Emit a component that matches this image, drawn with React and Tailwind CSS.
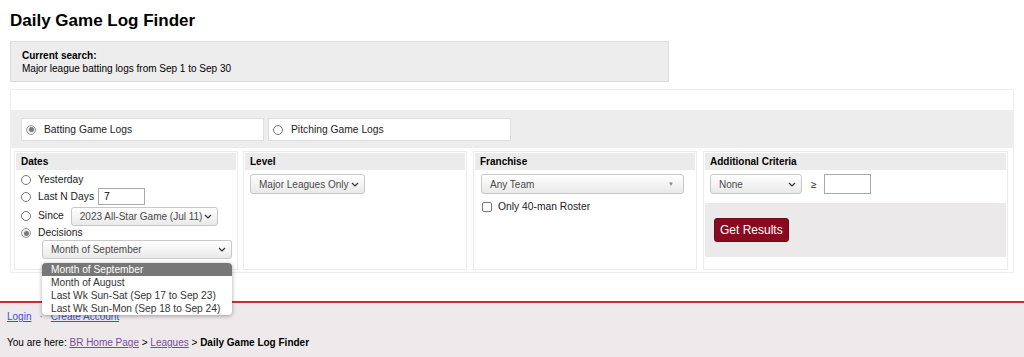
import React from 'react';

const Radio = ({ checked }) => (
    <span className={`inline-flex shrink-0 items-center justify-center w-[10px] h-[10px] rounded-full border ${checked ? 'border-[#9a9a9a] bg-[#ececec]' : 'border-[#777] bg-white'}`}>
        {checked && <span className="w-[5px] h-[5px] rounded-full bg-[#7a7a7a]" />}
    </span>
);

const Chevron = () => (
    <svg width="8" height="5" viewBox="0 0 8 5" fill="none" className="shrink-0">
        <path d="M1 1L4 4L7 1" stroke="#333" strokeWidth="1.2" />
    </svg>
);

const Select = ({ className = '', children, triangle }) => (
    <div className={`flex items-center justify-between rounded-[3px] border border-[#c8c8c8] bg-linear-to-b from-white to-[#e9e9e9] text-[#4a4a4a] text-[10px] pl-[8px] pr-[5px] ${className}`}>
        <span className="whitespace-nowrap">{children}</span>
        {triangle ? <span className="text-[6px] text-[#888] pr-[4px]">▼</span> : <Chevron />}
    </div>
);

const Column = ({ title, className = '', children }) => (
    <div className={`relative flex flex-col border border-[#ececec] p-[1px] ${className}`}>
        <div className="h-[17px] bg-[#ebebeb] pl-[5px] font-bold text-[10px] leading-[17px] text-black">{title}</div>
        {children}
    </div>
);

const DecisionMenu = () => {
    const items = ['Month of September', 'Month of August', 'Last Wk Sun-Sat (Sep 17 to Sep 23)', 'Last Wk Sun-Mon (Sep 18 to Sep 24)'];
    return (
        <div className="absolute left-[27px] top-[111px] z-10 w-[190px] rounded-[4px] bg-white shadow-[0_1px_4px_rgba(0,0,0,0.35)] text-[10.2px] leading-[13px] text-[#333]">
            {items.map((item, i) => (
                <div key={item} className={`pl-[9px] h-[13px] ${i === 0 ? 'bg-[#777] text-white rounded-t-[4px]' : ''}`}>{item}</div>
            ))}
        </div>
    );
};

export default function App() {
    return (
        <div className="w-[1024px] h-[357px] overflow-hidden bg-white font-['Liberation_Sans',Arial,sans-serif] text-[10px] text-[#222]">
            <div className="px-[10px]">
                <h1 className="pt-[9px] h-[32px] text-[17px] leading-[24px] font-bold text-black">Daily Game Log Finder</h1>

                {/* Current search */}
                <div className="mt-[9px] w-[659px] h-[41px] bg-[#eeeded] border border-[#dcdcdc] pl-[11px] pt-[7px] leading-[13px] text-black">
                    <div className="font-bold">Current search:</div>
                    <div>Major league batting logs from Sep 1 to Sep 30</div>
                </div>

                {/* Form */}
                <div className="mt-[7px] border border-[#eeeeee] pt-[20px] pb-[2px]">
                    <div className="h-[38px] bg-[#ededed] pl-[10px] pt-[8px] flex gap-[4px]">
                        <div className="w-[243px] h-[23px] bg-white border border-[#dedede] flex items-center pl-[4px] gap-[8px] text-[10.3px]">
                            <Radio checked />
                            <span>Batting Game Logs</span>
                        </div>
                        <div className="w-[243px] h-[23px] bg-white border border-[#dedede] flex items-center pl-[4px] gap-[8px] text-[10.3px]">
                            <Radio />
                            <span>Pitching Game Logs</span>
                        </div>
                    </div>

                    <div className="mt-[3px] pl-[3px] flex h-[119px]">
                        <Column title="Dates" className="w-[224px]">
                            <div className="pl-[5px] text-[10.3px]">
                                <div className="h-[17px] mt-[1px] flex items-center gap-[7px]">
                                    <Radio /><span>Yesterday</span>
                                </div>
                                <div className="h-[17px] flex items-center gap-[7px]">
                                    <Radio /><span>Last N Days</span>
                                    <div className="ml-[-3px] w-[47px] h-[17px] border border-[#aaa] pl-[5px] leading-[15px] text-black">7</div>
                                </div>
                                <div className="h-[20px] mt-[1px] flex items-center gap-[7px]">
                                    <Radio /><span>Since</span>
                                    <Select className="w-[147px] h-[19px]">2023 All-Star Game (Jul 11)</Select>
                                </div>
                                <div className="h-[14px] flex items-center gap-[7px]">
                                    <Radio checked /><span>Decisions</span>
                                </div>
                                <Select className="ml-[21px] w-[190px] h-[19px]">Month of September</Select>
                            </div>
                            <DecisionMenu />
                        </Column>

                        <Column title="Level" className="ml-[5px] w-[224px]">
                            <Select className="mt-[4px] ml-[5px] w-[115px] h-[20px]">Major Leagues Only</Select>
                        </Column>

                        <Column title="Franchise" className="ml-[6px] w-[224px]">
                            <Select className="mt-[4px] ml-[6px] w-[203px] h-[20px]" triangle>Any Team</Select>
                            <div className="mt-[5px] ml-[7px] flex items-center gap-[6px] text-[10.3px]">
                                <span className="w-[10px] h-[10px] rounded-[2px] border border-[#777] bg-white" />
                                <span>Only 40-man Roster</span>
                            </div>
                        </Column>

                        <Column title="Additional Criteria" className="ml-[6px] w-[305px]">
                            <div className="mt-[4px] ml-[5px] flex items-center">
                                <Select className="w-[92px] h-[20px]">None</Select>
                                <span className="ml-[9px] text-[10px]">≥</span>
                                <div className="ml-[7px] w-[47px] h-[20px] border border-[#aaa]" />
                            </div>
                            <div className="mt-[9px] h-[54px] bg-[#ebe9ea] pl-[9px] pt-[15px]">
                                <div className="inline-flex items-center h-[24px] px-[5px] rounded-[3px] bg-[#870b1f] border border-[#6e0818] text-white text-[12px]">Get Results</div>
                            </div>
                        </Column>
                    </div>
                </div>
            </div>

            {/* Footer */}
            <div className="mt-[28px] border-t-2 border-[#cd2b3d] bg-[#eeeaeb] h-[60px] pl-[7px] pt-[7px] text-[10px] leading-[13px]">
                <div className="flex items-center">
                    <span className="text-[#3b4fd8] underline">Login</span>
                    <span className="mx-[8px] text-[#666]">·</span>
                    <span className="text-[#3b4fd8] underline">Create Account</span>
                </div>
                <div className="mt-[13px] text-black">
                    You are here: <span className="text-[#7b4a9a] underline">BR Home Page</span> &gt; <span className="text-[#7b4a9a] underline">Leagues</span> &gt; <span className="font-bold">Daily Game Log Finder</span>
                </div>
            </div>
        </div>
    );
}
